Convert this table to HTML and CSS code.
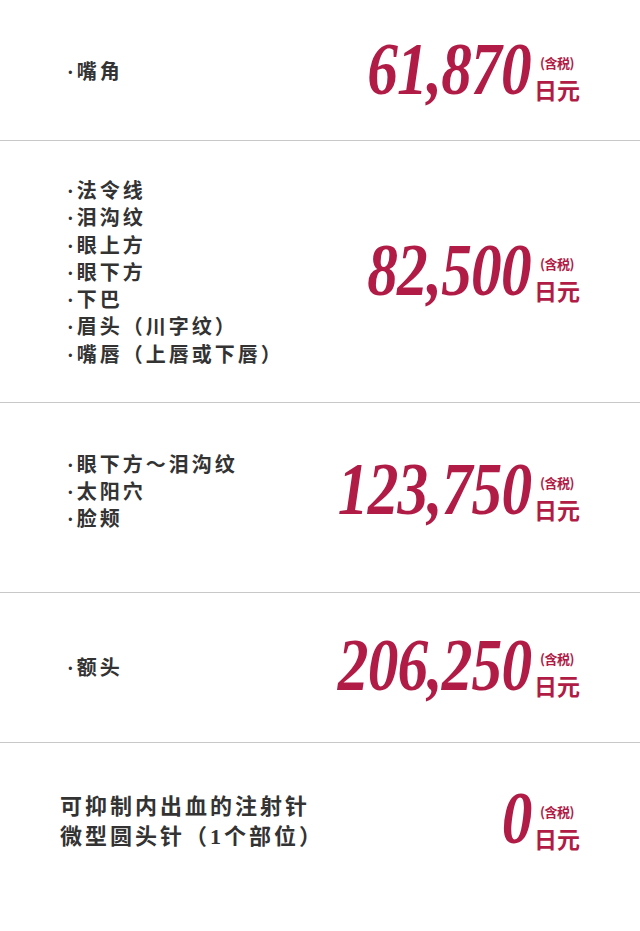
FILE: index.html
```html
<!DOCTYPE html>
<html lang="zh">
<head>
<meta charset="utf-8">
<link rel="stylesheet" href="styles.css">
</head>
<body>
<div class="table">
  <div class="row row-a">
    <ul class="parts"><li>·嘴角</li></ul>
    <div class="price"><span class="num">61,870</span><span class="unit"><span class="tax">(含税)</span><span class="yen">日元</span></span></div>
  </div>
  <div class="row row-b">
    <ul class="parts">
      <li>·法令线</li>
      <li>·泪沟纹</li>
      <li>·眼上方</li>
      <li>·眼下方</li>
      <li>·下巴</li>
      <li>·眉头（川字纹）</li>
      <li>·嘴唇（上唇或下唇）</li>
    </ul>
    <div class="price"><span class="num">82,500</span><span class="unit"><span class="tax">(含税)</span><span class="yen">日元</span></span></div>
  </div>
  <div class="row row-c">
    <ul class="parts">
      <li>·眼下方～泪沟纹</li>
      <li>·太阳穴</li>
      <li>·脸颊</li>
    </ul>
    <div class="price"><span class="num">123,750</span><span class="unit"><span class="tax">(含税)</span><span class="yen">日元</span></span></div>
  </div>
  <div class="row row-d">
    <ul class="parts"><li>·额头</li></ul>
    <div class="price"><span class="num">206,250</span><span class="unit"><span class="tax">(含税)</span><span class="yen">日元</span></span></div>
  </div>
  <div class="row row-e">
    <p class="note">可抑制内出血的注射针<br>微型圆头针（1个部位）</p>
    <div class="price"><span class="num">0</span><span class="unit"><span class="tax">(含税)</span><span class="yen">日元</span></span></div>
  </div>
</div>
</body>
</html>
```
FILE: styles.css
```css
html, body {
  margin: 0;
  padding: 0;
  background: #fff;
}
.table {
  width: 640px;
}
.row {
  display: flex;
  justify-content: space-between;
  align-items: center;
  padding: 0 60px 0 67px;
  border-bottom: 1px solid #c8c8c8;
  box-sizing: border-box;
}
.row-a { height: 141px; padding-top: 6px; }
.row-b { height: 262px; padding-top: 4px; }
.row-c { height: 190px; padding-bottom: 10px; }
.row-d { height: 150px; padding-top: 2px; }
.row-e { height: 188px; border-bottom: none; padding-left: 60px; padding-bottom: 30px; }
.parts {
  list-style: none;
  margin: 0;
  padding: 0;
  font-family: "Liberation Serif", "Noto Sans CJK SC", sans-serif;
  font-weight: 700;
  font-size: 20px;
  line-height: 27.3px;
  letter-spacing: 3px;
  color: #333;
}
.note {
  margin: 0;
  font-family: "Liberation Serif", "Noto Sans CJK SC", sans-serif;
  font-weight: 600;
  font-size: 22px;
  line-height: 30px;
  letter-spacing: 3px;
  color: #333;
}
.price {
  display: flex;
  align-items: flex-end;
  color: #b01c46;
  margin-top: -6px;
}
.num {
  display: inline-block;
  font-family: "Liberation Serif", serif;
  font-weight: bold;
  font-style: italic;
  font-size: 73px;
  line-height: 60px;
  letter-spacing: -1px;
  transform: scaleX(0.84);
  transform-origin: right bottom;
  margin-right: 3px;
}
.unit {
  display: flex;
  flex-direction: column;
  align-items: center;
  font-family: "Noto Sans CJK SC", serif;
  font-weight: 700;
  margin-bottom: -6px;
}
.tax {
  font-size: 13px;
  line-height: 19px;
  letter-spacing: -0.5px;
}
.yen {
  font-size: 23px;
  line-height: 34px;
}
```
